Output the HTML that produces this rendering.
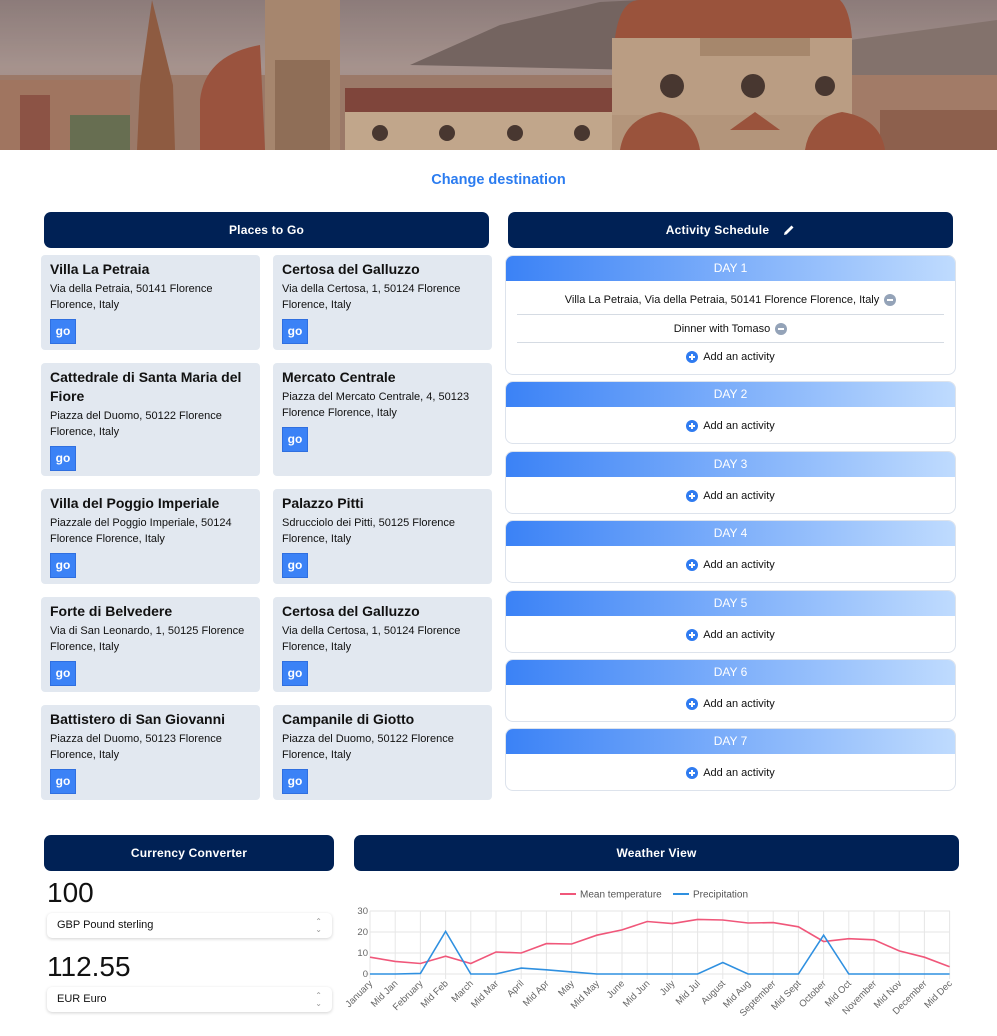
<!DOCTYPE html>
<html><head><meta charset="utf-8"><style>
*{box-sizing:border-box;margin:0;padding:0}
body{width:997px;height:1036px;background:#fff;font-family:"Liberation Sans",sans-serif;position:relative;overflow:hidden;color:#111}
.a{position:absolute}
.hdr{position:absolute;background:#002155;color:#fff;border-radius:7px;font-weight:bold;font-size:12px;display:flex;align-items:center;justify-content:center;letter-spacing:.2px}
.card{position:absolute;background:#e2e8f0;border-radius:4px;padding:5px 9px;width:219px}
.card h3{font-size:14px;font-weight:600;line-height:19px;color:#111}
.card p{font-size:11px;line-height:16px;margin-top:2px}
.go{display:block;width:26px;height:25px;background:#3b82f6;border:1px solid #2f6fe0;color:#fff;font-weight:bold;font-size:12px;text-align:center;line-height:22px;margin-top:6px}
.day{position:absolute;left:505px;width:451px;border:1px solid #dde3ec;border-radius:8px;background:#fff;overflow:hidden}
.dh{height:25px;background:linear-gradient(90deg,#3b82f6,#bfdbfe);color:#fff;font-size:12px;text-align:center;line-height:25px}
.row{font-size:11px;text-align:center;height:28px;line-height:28px;display:flex;align-items:center;justify-content:center;gap:5px}
.plus{width:12px;height:12px;border-radius:50%;background:#2f7bf0;color:#fff;display:inline-block;position:relative}
.plus:before{content:"";position:absolute;left:3px;top:5px;width:6px;height:2px;background:#fff}
.plus:after{content:"";position:absolute;left:5px;top:3px;width:2px;height:6px;background:#fff}
.minus{width:12px;height:12px;border-radius:50%;background:#94a3b8;display:inline-block;position:relative}
.minus:before{content:"";position:absolute;left:3px;top:5px;width:6px;height:2px;background:#fff}
.sel{position:absolute;left:47px;width:285px;height:25px;background:#fff;border-radius:5px;box-shadow:0 1px 3px rgba(0,0,0,.18);font-size:11px;line-height:25px;padding-left:10px}
.sel span{position:absolute;right:10px;top:0;color:#999;font-size:8px;line-height:8px;padding-top:5px;text-align:center}
</style></head><body>

<svg class="a" style="left:0;top:0" width="997" height="150" viewBox="0 0 997 150">
<defs><linearGradient id="sky" x1="0" y1="0" x2="0" y2="1"><stop offset="0" stop-color="#8a7a78"/><stop offset=".45" stop-color="#a8958f"/><stop offset="1" stop-color="#9a7d6c"/></linearGradient></defs>
<rect width="997" height="150" fill="url(#sky)"/>
<path d="M410 65 L500 25 L600 2 L640 0 L640 70 Z" fill="#6e5f5a"/>
<path d="M850 40 L997 20 L997 80 L850 80Z" fill="#7f6f68"/>
<rect x="0" y="75" width="997" height="75" fill="#9c7763"/>
<rect x="0" y="80" width="130" height="70" fill="#a2735a"/>
<rect x="20" y="95" width="30" height="55" fill="#8a4a3a"/>
<rect x="850" y="75" width="147" height="75" fill="#a47a62"/>
<rect x="880" y="110" width="117" height="40" fill="#8b5a44"/>
<rect x="70" y="115" width="60" height="35" fill="#5f6a48"/>
<path d="M152 0 L140 85 L137 150 L175 150 L173 85 Z" fill="#8c5436"/>
<path d="M200 150 L200 100 Q205 55 260 45 L265 150Z" fill="#9a4a32"/>
<rect x="265" y="0" width="75" height="150" fill="#a8876a"/>
<rect x="275" y="60" width="55" height="90" fill="#8e6a4f"/>
<rect x="345" y="88" width="267" height="24" fill="#7b3a2e"/>
<rect x="345" y="112" width="267" height="38" fill="#c8ac8c"/>
<g fill="#3a2a22"><circle cx="380" cy="133" r="8"/><circle cx="447" cy="133" r="8"/><circle cx="515" cy="133" r="8"/><circle cx="582" cy="133" r="8"/></g>
<path d="M615 38 Q620 0 640 0 L840 0 Q850 10 852 38Z" fill="#9b4a30"/>
<rect x="612" y="38" width="240" height="77" fill="#c0a283"/>
<rect x="700" y="38" width="110" height="18" fill="#a88868"/>
<g fill="#3a2a22"><circle cx="672" cy="86" r="12"/><circle cx="753" cy="86" r="12"/><circle cx="825" cy="86" r="10"/></g>
<rect x="612" y="115" width="240" height="35" fill="#b8987a"/>
<path d="M620 150 Q625 118 660 112 Q695 118 700 150Z" fill="#9b4a30"/>
<path d="M730 130 L755 112 L780 130Z" fill="#9b4a30"/>
<path d="M805 150 Q810 118 842 112 Q880 118 885 150Z" fill="#9b4a30"/>
<rect width="997" height="150" fill="#9a8888" opacity=".15"/>
</svg>

<div class="a" style="left:0;width:997px;top:172px;text-align:center;color:#2b7cf0;font-weight:bold;font-size:14.5px">Change destination</div>

<div class="hdr" style="left:44px;top:212px;width:445px;height:36px">Places to Go</div>
<div class="hdr" style="left:508px;top:212px;width:445px;height:36px">Activity Schedule<svg style="margin-left:14px" width="12" height="12" viewBox="0 0 12 12"><path d="M1 11 L1.6 8.4 L8.5 1.5 L10.5 3.5 L3.6 10.4 Z" fill="#fff"/></svg></div>

<div class="card" style="left:41px;top:255px;height:95px"><h3>Villa La Petraia</h3><p>Via della Petraia, 50141 Florence Florence, Italy</p><span class="go">go</span></div>
<div class="card" style="left:273px;top:255px;height:95px"><h3>Certosa del Galluzzo</h3><p>Via della Certosa, 1, 50124 Florence Florence, Italy</p><span class="go">go</span></div>
<div class="card" style="left:41px;top:363px;height:113px"><h3>Cattedrale di Santa Maria del Fiore</h3><p>Piazza del Duomo, 50122 Florence Florence, Italy</p><span class="go">go</span></div>
<div class="card" style="left:273px;top:363px;height:113px"><h3>Mercato Centrale</h3><p>Piazza del Mercato Centrale, 4, 50123 Florence Florence, Italy</p><span class="go">go</span></div>
<div class="card" style="left:41px;top:489px;height:95px"><h3>Villa del Poggio Imperiale</h3><p>Piazzale del Poggio Imperiale, 50124 Florence Florence, Italy</p><span class="go">go</span></div>
<div class="card" style="left:273px;top:489px;height:95px"><h3>Palazzo Pitti</h3><p>Sdrucciolo dei Pitti, 50125 Florence Florence, Italy</p><span class="go">go</span></div>
<div class="card" style="left:41px;top:597px;height:95px"><h3>Forte di Belvedere</h3><p>Via di San Leonardo, 1, 50125 Florence Florence, Italy</p><span class="go">go</span></div>
<div class="card" style="left:273px;top:597px;height:95px"><h3>Certosa del Galluzzo</h3><p>Via della Certosa, 1, 50124 Florence Florence, Italy</p><span class="go">go</span></div>
<div class="card" style="left:41px;top:705px;height:95px"><h3>Battistero di San Giovanni</h3><p>Piazza del Duomo, 50123 Florence Florence, Italy</p><span class="go">go</span></div>
<div class="card" style="left:273px;top:705px;height:95px"><h3>Campanile di Giotto</h3><p>Piazza del Duomo, 50122 Florence Florence, Italy</p><span class="go">go</span></div>

<div class="day" style="top:255px;height:120px"><div class="dh">DAY 1</div>
<div class="row" style="margin:5px 11px 0;border-bottom:1px solid #d5dbe3;height:29px">Villa La Petraia, Via della Petraia, 50141 Florence Florence, Italy <i class="minus"></i></div>
<div class="row" style="margin:0 11px;border-bottom:1px solid #d5dbe3">Dinner with Tomaso <i class="minus"></i></div>
<div class="row"><i class="plus"></i> Add an activity</div></div>
<div class="day" style="top:381px;height:63px"><div class="dh">DAY 2</div><div class="row" style="height:38px"><i class="plus"></i> Add an activity</div></div>
<div class="day" style="top:451px;height:63px"><div class="dh">DAY 3</div><div class="row" style="height:38px"><i class="plus"></i> Add an activity</div></div>
<div class="day" style="top:520px;height:63px"><div class="dh">DAY 4</div><div class="row" style="height:38px"><i class="plus"></i> Add an activity</div></div>
<div class="day" style="top:590px;height:63px"><div class="dh">DAY 5</div><div class="row" style="height:38px"><i class="plus"></i> Add an activity</div></div>
<div class="day" style="top:659px;height:63px"><div class="dh">DAY 6</div><div class="row" style="height:38px"><i class="plus"></i> Add an activity</div></div>
<div class="day" style="top:728px;height:63px"><div class="dh">DAY 7</div><div class="row" style="height:38px"><i class="plus"></i> Add an activity</div></div>

<div class="hdr" style="left:44px;top:835px;width:290px;height:36px">Currency Converter</div>
<div class="hdr" style="left:354px;top:835px;width:605px;height:36px">Weather View</div>

<div class="a" style="left:47px;top:877px;font-size:28px">100</div>
<div class="sel" style="top:913px">GBP Pound sterling<span>&#8963;<br>&#8964;</span></div>
<div class="a" style="left:47px;top:951px;font-size:28px">112.55</div>
<div class="sel" style="top:987px">EUR Euro<span>&#8963;<br>&#8964;</span></div>

<svg class="a" style="left:340px;top:880px" width="657" height="156" viewBox="340 880 657 156" font-family="Liberation Sans, sans-serif">
<line x1="560" y1="894" x2="576" y2="894" stroke="#f0577a" stroke-width="2"/><text x="580" y="897.5" font-size="10" fill="#555">Mean temperature</text>
<line x1="673" y1="894" x2="689" y2="894" stroke="#2f90e0" stroke-width="2"/><text x="693" y="897.5" font-size="10" fill="#555">Precipitation</text>
<g stroke="#e6e6e6" stroke-width="1">
<line x1="370" y1="911" x2="950" y2="911"/><line x1="370" y1="932" x2="950" y2="932"/><line x1="370" y1="953" x2="950" y2="953"/><line x1="365" y1="974" x2="950" y2="974"/>
<path d="M370 911V979M395.2 911V979M420.4 911V979M445.6 911V979M470.8 911V979M496 911V979M521.2 911V979M546.4 911V979M571.6 911V979M596.8 911V979M622 911V979M647.2 911V979M672.4 911V979M697.6 911V979M722.8 911V979M748 911V979M773.2 911V979M798.4 911V979M823.6 911V979M848.8 911V979M874 911V979M899.2 911V979M924.4 911V979M949.6 911V979"/>
</g>
<g font-size="9.5" fill="#666" text-anchor="end"><text x="368" y="914">30</text><text x="368" y="935">20</text><text x="368" y="956">10</text><text x="368" y="977">0</text></g>
<polyline fill="none" stroke="#f0577a" stroke-width="1.6" points="370,957.2 395.2,961.4 420.4,963.5 445.6,956.2 470.8,963.5 496,952 521.2,953 546.4,943.6 571.6,944 596.8,935.2 622,929.9 647.2,921.5 672.4,923.6 697.6,919.4 722.8,920 748,923 773.2,922.6 798.4,926.8 823.6,941.5 848.8,938.7 874,939.8 899.2,950.9 924.4,957.2 949.6,966.7"/>
<polyline fill="none" stroke="#2f90e0" stroke-width="1.6" points="370,974 395.2,974 420.4,973.4 445.6,931.4 470.8,974 496,974 521.2,968.1 546.4,969.8 571.6,971.9 596.8,974 622,974 647.2,974 672.4,974 697.6,974 722.8,962.5 748,974 773.2,974 798.4,974 823.6,935.2 848.8,974 874,974 899.2,974 924.4,974 949.6,974"/>
<g font-size="9.5" fill="#666" text-anchor="end">
<text transform="translate(373,984) rotate(-45)">January</text>
<text transform="translate(398.2,984) rotate(-45)">Mid Jan</text>
<text transform="translate(423.4,984) rotate(-45)">February</text>
<text transform="translate(448.6,984) rotate(-45)">Mid Feb</text>
<text transform="translate(473.8,984) rotate(-45)">March</text>
<text transform="translate(499,984) rotate(-45)">Mid Mar</text>
<text transform="translate(524.2,984) rotate(-45)">April</text>
<text transform="translate(549.4,984) rotate(-45)">Mid Apr</text>
<text transform="translate(574.6,984) rotate(-45)">May</text>
<text transform="translate(599.8,984) rotate(-45)">Mid May</text>
<text transform="translate(625,984) rotate(-45)">June</text>
<text transform="translate(650.2,984) rotate(-45)">Mid Jun</text>
<text transform="translate(675.4,984) rotate(-45)">July</text>
<text transform="translate(700.6,984) rotate(-45)">Mid Jul</text>
<text transform="translate(725.8,984) rotate(-45)">August</text>
<text transform="translate(751,984) rotate(-45)">Mid Aug</text>
<text transform="translate(776.2,984) rotate(-45)">September</text>
<text transform="translate(801.4,984) rotate(-45)">Mid Sept</text>
<text transform="translate(826.6,984) rotate(-45)">October</text>
<text transform="translate(851.8,984) rotate(-45)">Mid Oct</text>
<text transform="translate(877,984) rotate(-45)">November</text>
<text transform="translate(902.2,984) rotate(-45)">Mid Nov</text>
<text transform="translate(927.4,984) rotate(-45)">December</text>
<text transform="translate(952.6,984) rotate(-45)">Mid Dec</text>
</g>
</svg>
</body></html>
